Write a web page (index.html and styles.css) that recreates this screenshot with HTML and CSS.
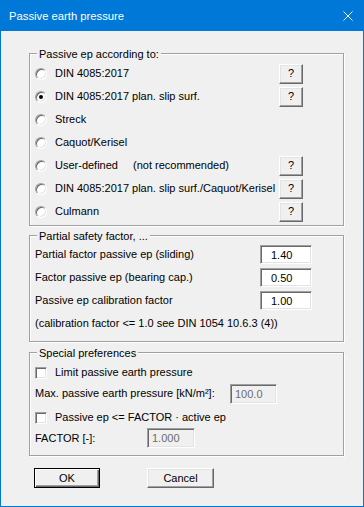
FILE: index.html
```html
<!DOCTYPE html>
<html lang="en">
<head>
    <meta charset="UTF-8">
    <meta name="viewport" content="width=device-width, initial-scale=1.0">
    <title>Passive earth pressure</title>
    <link rel="stylesheet" href="styles.css">
</head>
<body>
    <div class="window">
        <div class="titlebar">
            <span>Passive earth pressure</span>
            <svg class="close" viewBox="0 0 10 10"><path d="M0.5 0.5 L9.5 9.5 M9.5 0.5 L0.5 9.5" stroke="#fff" stroke-width="1" fill="none"/></svg>
        </div>
        <div class="content">
            <div class="group group-method">
                <div class="group-title">Passive ep according to:</div>
                <div class="row"><span class="radio"></span><span class="label">DIN 4085:2017</span><button class="help">?</button></div>
                <div class="row"><span class="radio checked"></span><span class="label">DIN 4085:2017 plan. slip surf.</span><button class="help">?</button></div>
                <div class="row"><span class="radio"></span><span class="label">Streck</span></div>
                <div class="row"><span class="radio"></span><span class="label">Caquot/Kerisel</span></div>
                <div class="row"><span class="radio"></span><span class="label">User-defined<span class="hint">(not recommended)</span></span><button class="help">?</button></div>
                <div class="row"><span class="radio"></span><span class="label">DIN 4085:2017 plan. slip surf./Caquot/Kerisel</span><button class="help">?</button></div>
                <div class="row"><span class="radio"></span><span class="label">Culmann</span><button class="help">?</button></div>
            </div>

            <div class="group group-safety">
                <div class="group-title">Partial safety factor, ...</div>
                <div class="row"><span class="label">Partial factor passive ep (sliding)</span><input class="value" type="text" value="1.40"></div>
                <div class="row"><span class="label">Factor passive ep (bearing cap.)</span><input class="value" type="text" value="0.50"></div>
                <div class="row"><span class="label">Passive ep calibration factor</span><input class="value" type="text" value="1.00"></div>
                <div class="row"><span class="label">(calibration factor &lt;= 1.0 see DIN 1054 10.6.3 (4))</span></div>
            </div>

            <div class="group group-special">
                <div class="group-title">Special preferences</div>
                <div class="check-row"><span class="check"></span><span>Limit passive earth pressure</span></div>
                <div class="check-row"><span class="label-max">Max. passive earth pressure [kN/m²]:</span><input class="value-off value-max" type="text" value="100.0" disabled></div>
                <div class="check-row check-gap"><span class="check"></span><span>Passive ep &lt;= FACTOR · active ep</span></div>
                <div class="check-row last"><span class="label-factor">FACTOR [-]:</span><input class="value-off value-factor" type="text" value="1.000" disabled></div>
            </div>

            <div class="actions">
                <button class="btn btn-default">OK</button>
                <button class="btn btn-cancel">Cancel</button>
            </div>
        </div>
    </div>
</body>
</html>
```

FILE: styles.css
```css
* {
    box-sizing: border-box;
}
html, body {
    margin: 0;
    padding: 0;
    background: #f0f0f0;
}
body {
    font-family: "Liberation Sans", Arial, sans-serif;
    font-size: 11px;
    line-height: 13px;
    color: #000;
}
.window {
    width: 364px;
    height: 507px;
    border: 1px solid #0078d7;
    background: #f0f0f0;
}
.titlebar {
    height: 30px;
    background: #0078d7;
    color: #fff;
    font-size: 11.25px;
    display: flex;
    align-items: center;
    justify-content: space-between;
    padding: 0 10px 0 8px;
}
.close {
    width: 10px;
    height: 10px;
}
.content {
    padding-left: 28px;
}
.group {
    width: 315px;
    border: 1px solid #a0a0a0;
    box-shadow: 1px 1px 0 #fff, inset 1px 1px 0 #fff;
    padding-left: 5px;
}
.group-title {
    display: table;
    margin: -6px 0 0 2px;
    padding: 0 2px;
    background: #f0f0f0;
}
.group-method {
    margin-top: 22px;
    padding-right: 40px;
    padding-bottom: 2px;
}
.group-method .group-title {
    margin-bottom: 1px;
}
.group-safety {
    margin-top: 9px;
    padding-right: 31px;
    padding-bottom: 6px;
}
.group-special {
    margin-top: 10px;
    padding-bottom: 7px;
}
.group-special .group-title {
    margin-bottom: 2px;
}
.row {
    display: flex;
    align-items: center;
    height: 23px;
}
.label {
    flex: 1;
    white-space: nowrap;
}
.hint {
    margin-left: 15px;
}
.radio {
    flex: none;
    width: 12px;
    height: 12px;
    margin-right: 8px;
    border-radius: 50%;
    background: #fff;
    border: 1px solid;
    border-color: #a0a0a0 #fff #fff #a0a0a0;
    box-shadow: inset 1px 1px 0 #696969, inset -1px -1px 0 #e3e3e3;
}
.radio.checked::after {
    content: "";
    display: block;
    width: 4px;
    height: 4px;
    margin: 3px;
    border-radius: 50%;
    background: #000;
}
.help, .btn {
    font: inherit;
    color: #000;
    padding: 0;
    background: #f0f0f0;
    border: 1px solid;
    border-color: #fff #696969 #696969 #fff;
    box-shadow: inset -1px -1px 0 #a0a0a0, inset 1px 1px 0 #e3e3e3;
}
.help {
    flex: none;
    width: 24px;
    height: 20px;
}
.value, .value-off {
    font: inherit;
    color: #000;
    background: #fff;
    border: 1px solid;
    border-color: #a0a0a0 #fff #fff #a0a0a0;
    box-shadow: inset 1px 1px 0 #696969, inset -1px -1px 0 #e3e3e3;
    outline: none;
}
.value {
    flex: none;
    width: 52px;
    height: 19px;
    padding: 0 0 0 10px;
}
.value-off {
    height: 20px;
    padding: 0 0 0 4px;
    background: #f0f0f0;
    color: #6d6d6d;
}
.value-max {
    width: 47px;
}
.value-factor {
    width: 48px;
}
.check-row {
    display: flex;
    align-items: center;
    height: 21px;
}
.check-row.check-gap {
    margin-top: 3px;
}
.check-row.last {
    height: 20px;
}
.check {
    flex: none;
    width: 12px;
    height: 12px;
    margin-right: 8px;
    background: #fff;
    border: 1px solid;
    border-color: #a0a0a0 #fff #fff #a0a0a0;
    box-shadow: inset 1px 1px 0 #696969, inset -1px -1px 0 #e3e3e3;
}
.label-max {
    width: 195px;
}
.label-factor {
    width: 112px;
}
.actions {
    display: flex;
    gap: 47px;
    margin-top: 12px;
    padding-left: 5px;
}
.btn {
    height: 20px;
}
.btn-default {
    width: 66px;
    border-color: #000;
    box-shadow: inset 1px 1px 0 #fff, inset -1px -1px 0 #696969, inset -2px -2px 0 #a0a0a0;
}
.btn-cancel {
    width: 67px;
}
```
